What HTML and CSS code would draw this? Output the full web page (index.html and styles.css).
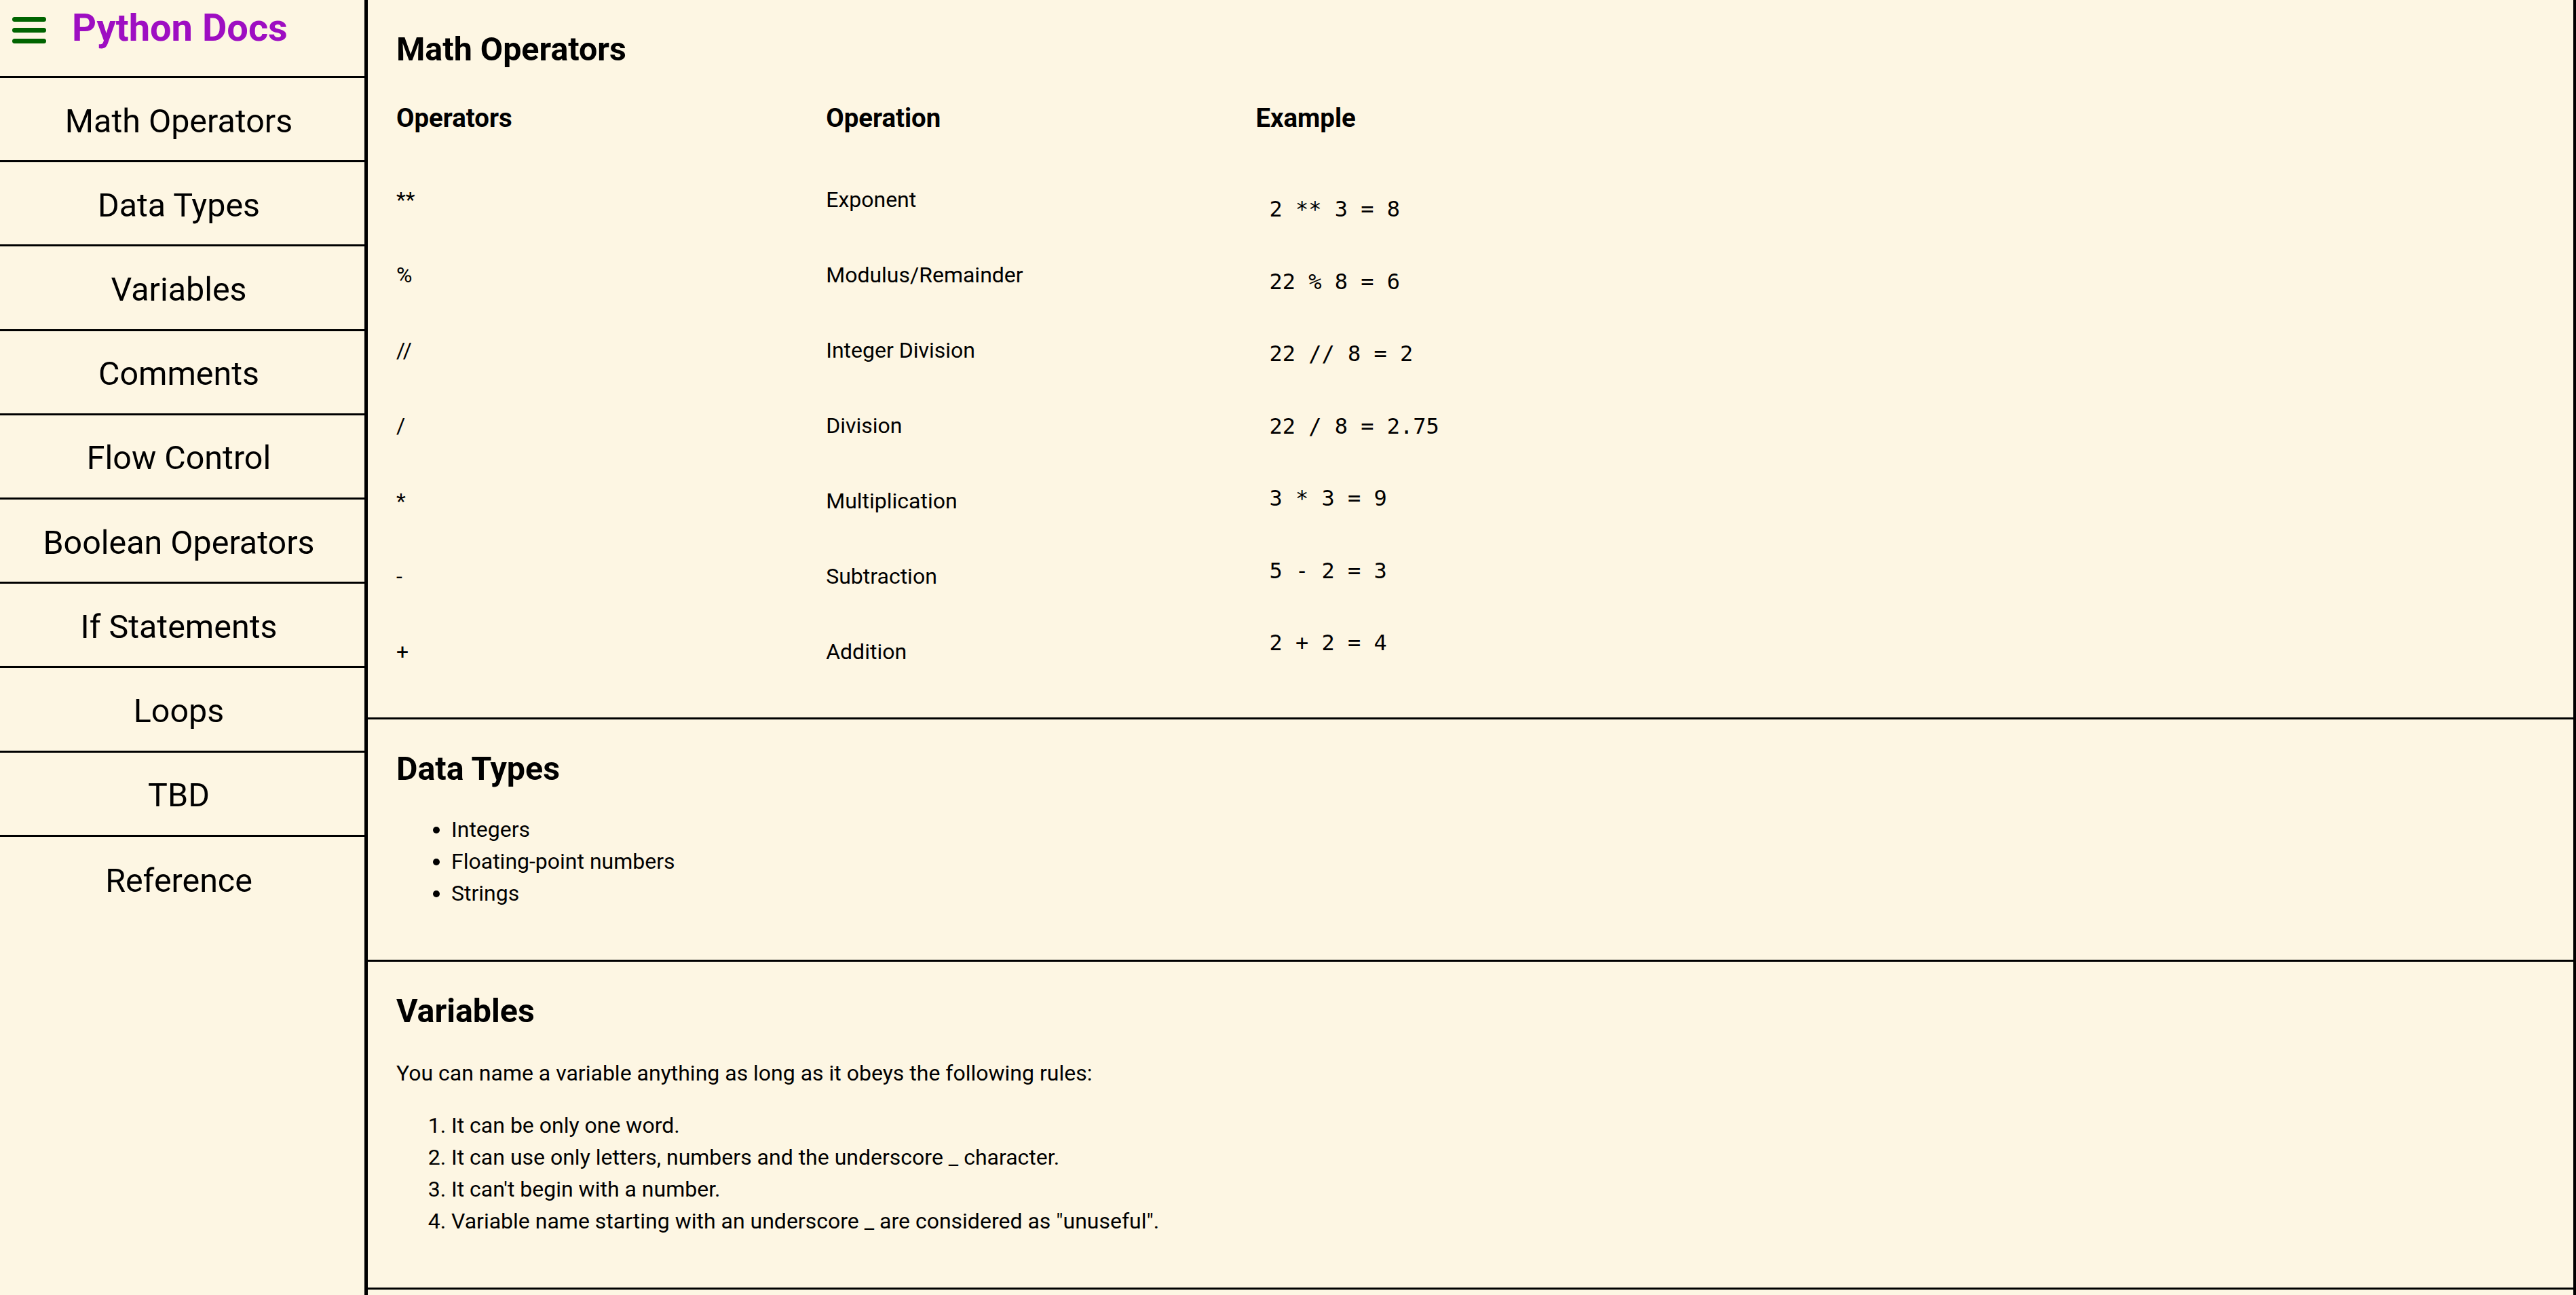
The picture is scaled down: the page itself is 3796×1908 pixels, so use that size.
FILE: index.html
```html
<!DOCTYPE html>
<html lang="en">
<head>
<meta charset="utf-8">
<title>Python Docs</title>
<link rel="stylesheet" href="styles.css">
</head>
<body>
<div class="layout">
  <nav class="sidebar">
    <header class="brand">
      <svg class="burger" viewBox="0 0 50 39" width="50" height="39" aria-hidden="true">
        <g stroke="#006400" stroke-width="7" stroke-linecap="round">
          <line x1="3.5" y1="3.5" x2="46.5" y2="3.5"/>
          <line x1="3.5" y1="19.5" x2="46.5" y2="19.5"/>
          <line x1="3.5" y1="35.5" x2="46.5" y2="35.5"/>
        </g>
      </svg>
      <span class="brand-title">Python Docs</span>
    </header>
    <ul class="nav">
      <li class="nav-item"><a class="nav-link" href="#math">Math Operators</a></li>
      <li class="nav-item"><a class="nav-link" href="#types">Data Types</a></li>
      <li class="nav-item"><a class="nav-link" href="#vars">Variables</a></li>
      <li class="nav-item"><a class="nav-link" href="#comments">Comments</a></li>
      <li class="nav-item"><a class="nav-link" href="#flow">Flow Control</a></li>
      <li class="nav-item"><a class="nav-link" href="#bool">Boolean Operators</a></li>
      <li class="nav-item"><a class="nav-link" href="#if">If Statements</a></li>
      <li class="nav-item"><a class="nav-link" href="#loops">Loops</a></li>
      <li class="nav-item"><a class="nav-link" href="#tbd">TBD</a></li>
      <li class="nav-item"><a class="nav-link" href="#ref">Reference</a></li>
    </ul>
  </nav>
  <main class="main">
    <section class="doc" id="math">
      <h2 class="doc-title doc-title-ops">Math Operators</h2>
      <div class="ops">
        <div class="ops-col">
          <div class="ops-head">Operators</div>
          <div class="ops-cell">**</div>
          <div class="ops-cell">%</div>
          <div class="ops-cell">//</div>
          <div class="ops-cell">/</div>
          <div class="ops-cell">*</div>
          <div class="ops-cell">-</div>
          <div class="ops-cell">+</div>
        </div>
        <div class="ops-col">
          <div class="ops-head">Operation</div>
          <div class="ops-cell">Exponent</div>
          <div class="ops-cell">Modulus/Remainder</div>
          <div class="ops-cell">Integer Division</div>
          <div class="ops-cell">Division</div>
          <div class="ops-cell">Multiplication</div>
          <div class="ops-cell">Subtraction</div>
          <div class="ops-cell">Addition</div>
        </div>
        <div class="ops-col">
          <div class="ops-head ops-head-code">Example</div>
          <code class="ops-code">2 ** 3 = 8</code>
          <code class="ops-code">22 % 8 = 6</code>
          <code class="ops-code">22 // 8 = 2</code>
          <code class="ops-code">22 / 8 = 2.75</code>
          <code class="ops-code">3 * 3 = 9</code>
          <code class="ops-code">5 - 2 = 3</code>
          <code class="ops-code">2 + 2 = 4</code>
        </div>
      </div>
    </section>

    <section class="doc" id="types">
      <h2 class="doc-title">Data Types</h2>
      <ul class="doc-list doc-list-first">
        <li>Integers</li>
        <li>Floating-point numbers</li>
        <li>Strings</li>
      </ul>
    </section>

    <section class="doc" id="vars">
      <h2 class="doc-title">Variables</h2>
      <p class="doc-text">You can name a variable anything as long as it obeys the following rules:</p>
      <ol class="doc-list">
        <li>It can be only one word.</li>
        <li>It can use only letters, numbers and the underscore _ character.</li>
        <li>It can't begin with a number.</li>
        <li>Variable name starting with an underscore _ are considered as "unuseful".</li>
      </ol>
    </section>
  </main>
</div>
</body>
</html>
```

FILE: styles.css
```css
* {
  box-sizing: border-box;
}

html,
body {
  margin: 0;
  padding: 0;
}

body {
  background: #fdf6e3;
  color: #000;
  font-family: Roboto, "Liberation Sans", sans-serif;
  font-size: 32px;
  line-height: 47px;
}

.layout {
  display: flex;
  min-height: 100vh;
}

/* Sidebar */
.sidebar {
  flex: 0 0 542px;
  border-right: 5px solid #000;
}

.brand {
  height: 115px;
  border-bottom: 3px solid #000;
  display: flex;
  align-items: flex-start;
  gap: 38px;
  padding: 8px 0 0 18px;
}

.burger {
  display: block;
  margin-top: 17px;
  flex: 0 0 auto;
}

.brand-title {
  font-size: 56px;
  line-height: 66px;
  font-weight: 700;
  color: #9e0ec2;
}

.nav {
  list-style: none;
  margin: 0;
  padding: 0;
}

.nav-item {
  height: 124.2px;
  border-bottom: 3px solid #000;
}

.nav-item:last-child {
  border-bottom: none;
}

.nav-link {
  display: flex;
  align-items: center;
  justify-content: center;
  height: 100%;
  padding: 5px 10px 0 0;
  font-size: 48.4px;
  line-height: 57px;
  color: #000;
  text-decoration: none;
}

/* Main */
.main {
  flex: 1 1 auto;
  min-width: 0;
  border-right: 4px solid #000;
}

.doc {
  padding: 44px 42px 41px;
  border-bottom: 3px solid #000;
}

.doc-title {
  margin: 0;
  font-size: 48.4px;
  line-height: 57px;
  font-weight: 700;
}

.doc-title-ops {
  margin-bottom: 50px;
}

.ops {
  display: grid;
  grid-template-columns: repeat(3, 1fr);
  width: 60%;
}

.ops-col {
  display: flex;
  flex-direction: column;
  align-items: flex-start;
}

.ops-head {
  font-size: 38.4px;
  line-height: 45px;
  font-weight: 700;
  margin-bottom: 43px;
}

.ops-head-code {
  margin-bottom: 59px;
}

.ops-cell {
  font-size: 32px;
  line-height: 111px;
  height: 111px;
}

.ops-code {
  display: block;
  font-family: "DejaVu Sans Mono", "Liberation Mono", monospace;
  font-size: 32px;
  line-height: 106.5px;
  height: 106.5px;
  padding-left: 20px;
}

.doc-list {
  margin: 0 0 33px;
  padding-left: 81px;
}

.doc-list-first {
  margin-top: 38px;
}

.doc-text {
  margin: 40px 0 30px;
}
```
